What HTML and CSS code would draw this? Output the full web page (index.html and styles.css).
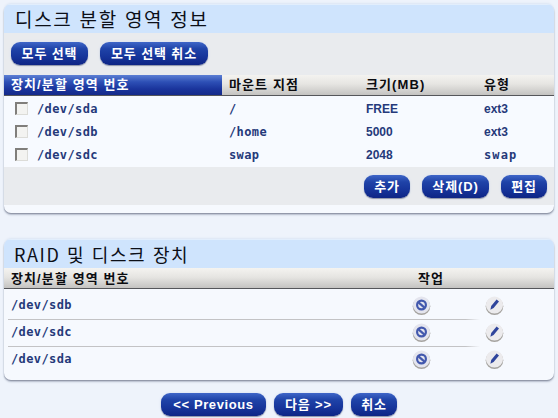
FILE: index.html
```html
<!DOCTYPE html>
<html lang="ko">
<head>
<meta charset="utf-8">
<title>디스크 분할 영역 정보</title>
<link rel="stylesheet" href="styles.css">
</head>
<body>
<svg class="defs" width="0" height="0" aria-hidden="true">
  <defs>
    <symbol id="ico-del" viewBox="0 0 19 19">
      <circle cx="9.5" cy="10.2" r="8.8" fill="#a5a39f"/>
      <circle cx="9.5" cy="9" r="8.6" fill="#e4e5ee"/>
      <circle cx="9.5" cy="9" r="4.4" fill="none" stroke="#4258ad" stroke-width="2.2"/>
      <path d="M6.5 6.4 12.5 11.6" stroke="#4258ad" stroke-width="2.2" fill="none"/>
    </symbol>
    <symbol id="ico-edit" viewBox="0 0 19 19">
      <circle cx="9.5" cy="10.2" r="8.8" fill="#a5a39f"/>
      <circle cx="9.5" cy="9" r="8.6" fill="#ecebed"/>
      <path d="M11.6 3.4 14 5.4 8.6 12 5.4 13.8 6.2 10Z" fill="#2f459c"/>
    </symbol>
  </defs>
</svg>
<main class="page">
  <section class="card card-top">
    <h1 class="card-title">디스크 분할 영역 정보</h1>
    <div class="toolbar">
      <button class="btn btn-a">모두 선택</button>
      <button class="btn btn-b">모두 선택 취소</button>
    </div>
    <div class="grid head-row">
      <div class="th th-active">장치/분할 영역 번호</div>
      <div class="th">마운트 지점</div>
      <div class="th">크기(MB)</div>
      <div class="th">유형</div>
    </div>
    <div class="rows">
      <div class="grid row">
        <div class="cell path first"><span class="check"></span>/dev/sda</div>
        <div class="cell path">/</div>
        <div class="cell">FREE</div>
        <div class="cell">ext3</div>
      </div>
      <div class="grid row">
        <div class="cell path first"><span class="check"></span>/dev/sdb</div>
        <div class="cell path">/home</div>
        <div class="cell">5000</div>
        <div class="cell">ext3</div>
      </div>
      <div class="grid row">
        <div class="cell path first"><span class="check"></span>/dev/sdc</div>
        <div class="cell path">swap</div>
        <div class="cell">2048</div>
        <div class="cell path wide">swap</div>
      </div>
    </div>
    <div class="actions">
      <button class="btn btn-c">추가</button>
      <button class="btn btn-d">삭제(D)</button>
      <button class="btn btn-c">편집</button>
    </div>
  </section>

  <section class="card card-bottom">
    <h2 class="card-title title-raid">RAID 및 디스크 장치</h2>
    <div class="raid-grid head-row raid-head">
      <div class="th th-first">장치/분할 영역 번호</div>
      <div class="th th-center">작업</div>
      <div class="th"></div>
    </div>
    <div class="raid-rows">
      <div class="raid-grid raid-row">
        <div class="cell path">/dev/sdb</div>
        <div class="icon-cell"><svg class="icon"><use href="#ico-del"/></svg></div>
        <div class="icon-cell"><svg class="icon"><use href="#ico-edit"/></svg></div>
      </div>
      <div class="raid-grid raid-row">
        <div class="cell path">/dev/sdc</div>
        <div class="icon-cell"><svg class="icon"><use href="#ico-del"/></svg></div>
        <div class="icon-cell"><svg class="icon"><use href="#ico-edit"/></svg></div>
      </div>
      <div class="raid-grid raid-row last">
        <div class="cell path">/dev/sda</div>
        <div class="icon-cell"><svg class="icon"><use href="#ico-del"/></svg></div>
        <div class="icon-cell"><svg class="icon"><use href="#ico-edit"/></svg></div>
      </div>
    </div>
  </section>

  <nav class="wizard">
    <button class="btn btn-prev">&lt;&lt; Previous</button>
    <button class="btn btn-next">다음 &gt;&gt;</button>
    <button class="btn btn-cancel">취소</button>
  </nav>
</main>
</body>
</html>
```
FILE: styles.css
```css
* { box-sizing: border-box; }
html, body { margin: 0; padding: 0; }
body {
  width: 558px;
  height: 418px;
  overflow: hidden;
  background: #eef3fb;
  font-family: "Liberation Sans", "Noto Sans CJK KR", sans-serif;
}
.defs { position: absolute; }
.page { padding: 4px 4px 0 4px; display: flex; flex-direction: column; }
.card {
  width: 550px;
  background: #f6f9fe;
  border-radius: 7px;
  overflow: hidden;
  box-shadow: 0 1px 1px #8f95a6, 0 2px 2px #b9c0d0, 0 -1px 2px #dce6f4;
}
.card-top { height: 209px; }
.card-bottom { margin-top: 26px; height: 141px; }
.card-title {
  margin: 0;
  height: 29px;
  padding: 0 0 0 11px;
  background: #cfe4fd;
  border-top: 1px solid #e2eefc;
  color: #0c0f17;
  font-family: "Noto Sans CJK KR", sans-serif;
  font-size: 19px;
  font-weight: 400;
  line-height: 27px;
  letter-spacing: 1.7px;
  white-space: nowrap;
}
.title-raid { padding-left: 10px; font-size: 18px; line-height: 28px; letter-spacing: 1.6px; }
.toolbar {
  height: 42px;
  padding: 9px 0 0 7px;
  background: #e9ebee;
  display: flex;
  gap: 12px;
}
.btn {
  display: block;
  height: 23px;
  padding: 0;
  border: 0;
  border-radius: 9px;
  background: linear-gradient(#3f66c8 0, #1f43a8 30%, #16349a 65%, #0e2585 100%);
  box-shadow: 0 1px 1px #8e94a8, 0 0 3px #d5def0;
  color: #fff;
  font-family: "Liberation Sans", "Noto Sans CJK KR", sans-serif;
  font-size: 13px;
  font-weight: 700;
  line-height: 21px;
  letter-spacing: 0.9px;
  text-align: center;
  white-space: nowrap;
}
.btn-a { width: 77px; }
.btn-b { width: 108px; }
.btn-c { width: 46px; }
.btn-d { width: 67px; }
.grid {
  display: grid;
  grid-template-columns: 218px 137px 118px 73px;
}
.head-row {
  height: 21px;
  background: linear-gradient(#f4f3f0 0, #e6e5e2 45%, #c4c3c1 100%);
  border-bottom: 1px solid #55565a;
  color: #0b0c10;
  font-size: 13px;
  font-weight: 700;
}
.th {
  padding-left: 7px;
  line-height: 20px;
  letter-spacing: 1.1px;
  white-space: nowrap;
  overflow: hidden;
}
.th-active {
  padding-left: 7px;
  color: #fff;
  background: linear-gradient(#5c7fd4 0, #2d4fb5 35%, #1a349c 70%, #152a8a 100%);
}
.rows { height: 71px; padding-top: 1px; background: #f7faff; }
.row { height: 23px; align-items: center; }
.cell {
  color: #25397a;
  font-size: 12px;
  font-weight: 700;
  line-height: 20px;
  padding-left: 7px;
  white-space: nowrap;
}
.path {
  font-family: "DejaVu Sans Mono", "Liberation Mono", monospace;
  letter-spacing: 0.4px;
}
.wide { letter-spacing: 1.1px; }
.first { display: flex; align-items: center; padding-left: 11px; }
.check {
  display: block;
  width: 13px;
  height: 13px;
  margin-right: 9px;
  background: #f3f3f1;
  border-top: 2px solid #807e7b;
  border-left: 2px solid #807e7b;
  border-right: 1px solid #dcdcd8;
  border-bottom: 1px solid #dcdcd8;
}
.actions {
  height: 38px;
  padding: 8px 7px 0 0;
  background: #e9ebee;
  display: flex;
  justify-content: flex-end;
  gap: 12px;
}
.raid-grid {
  display: grid;
  grid-template-columns: 403px 73px 74px;
}
.raid-head { height: 21px; }
.raid-head .th { line-height: 21px; }
.th-first { padding-left: 7px; }
.th-center { padding-left: 11px; }
.raid-rows { padding-top: 2px; }
.raid-row { height: 27px; }
.raid-row .cell {
  margin-left: 4px;
  padding-left: 3px;
  line-height: 28px;
  border-bottom: 1px solid #c3c3c5;
}
.raid-row .icon-cell:nth-child(2) {
  background: linear-gradient(to right, #c3c3c5 80%, transparent) left bottom / 100% 1px no-repeat;
}
.raid-row.last .cell { border-bottom: 0; }
.raid-row.last .icon-cell:nth-child(2) { background: none; }
.icon-cell { display: flex; align-items: center; padding-left: 5px; }
.icon { width: 19px; height: 19px; display: block; }
.wizard {
  margin-top: 13px;
  display: flex;
  gap: 8px;
  padding-left: 157px;
}
.btn-prev { width: 105px; letter-spacing: 0.6px; }
.btn-next { width: 69px; }
.btn-cancel { width: 46px; }
```
